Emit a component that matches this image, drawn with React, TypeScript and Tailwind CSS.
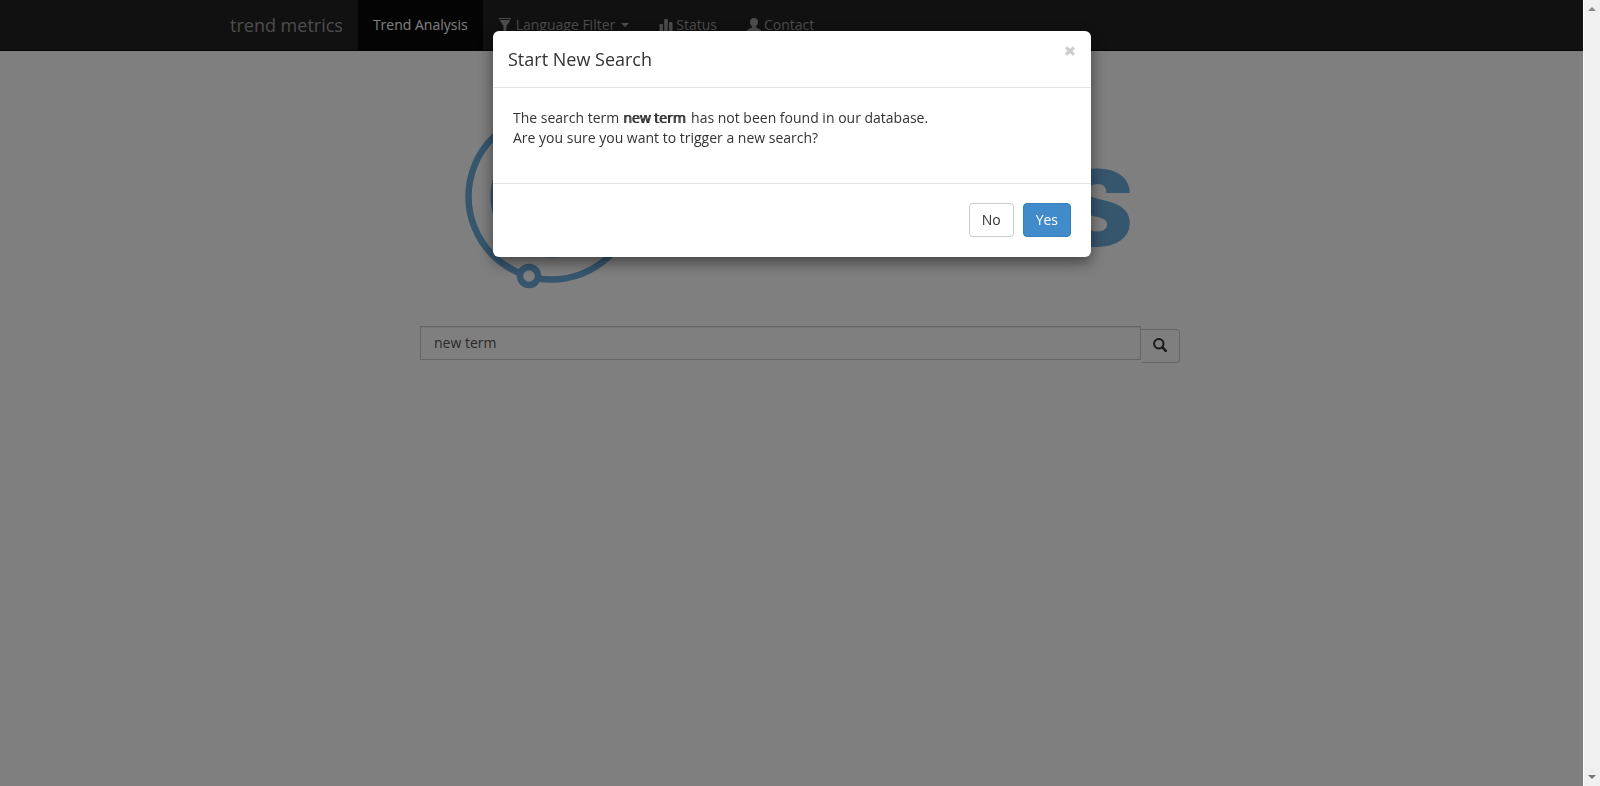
import { useState } from "react";

const navLink = "flex h-[50px] items-center px-[15px] text-[#999]";

function FilterIcon() {
  return (
    <svg className="h-3.5 w-3.5" viewBox="0 0 14 14" fill="currentColor" aria-hidden="true">
      <path d="M1 0h12v1H1zM1.500 2h11L8.500 8v4l-3 2V8z" />
    </svg>
  );
}

function StatsIcon() {
  return (
    <svg className="h-3.5 w-3.5" viewBox="0 0 14 14" fill="currentColor" aria-hidden="true">
      <rect x="0.500" y="6" width="3.500" height="8" rx="1" />
      <rect x="5.200" y="1" width="3.600" height="13" rx="1" />
      <rect x="10" y="4" width="3.500" height="10" rx="1" />
    </svg>
  );
}

function UserIcon() {
  return (
    <svg className="h-3.5 w-3.5" viewBox="0 0 14 14" fill="currentColor" aria-hidden="true">
      <path d="M7 0c2.700 0 4 1.600 4 3.800 0 1.900-.8 3.600-2 4.600v1.100c1 .8 5 1.500 5 3.300V14H0v-1.200C0 11 4 10.300 5 9.500V8.400C3.800 7.400 3 5.700 3 3.800 3 1.600 4.300 0 7 0z" />
    </svg>
  );
}

function SearchIcon() {
  return (
    <svg className="mb-0.5 h-3.5 w-3.5" viewBox="0 0 14 14" fill="none" stroke="currentColor" aria-hidden="true">
      <circle cx="5.800" cy="5.800" r="4.700" strokeWidth="2" />
      <path d="M9.400 9.400l3.400 3.400" strokeWidth="2.600" strokeLinecap="round" />
    </svg>
  );
}

function Logo() {
  return (
    <svg className="h-[220px] w-[680px]" viewBox="0 0 680 220" role="img" aria-label="Logo">
      <g fill="none" stroke="#6daddd">
        <circle cx="91.500" cy="119.500" r="83" strokeWidth="6.500" />
        <circle cx="91.500" cy="119.500" r="57" strokeWidth="8" />
        <circle cx="69" cy="199" r="9" strokeWidth="6.500" fill="#fff" />
      </g>
      <text
        x="674"
        y="169"
        textAnchor="end"
        className="fill-[#6daddd] font-[Roboto,sans-serif] text-[142px] font-black"
      >
        s
      </text>
    </svg>
  );
}

function Navbar() {
  return (
    <nav className="h-[51px] border-b border-[#080808] bg-[#222]">
      <div className="mx-auto flex max-w-[1170px]">
        <a href="#home" className="flex h-[50px] items-center px-[15px] text-lg text-[#999]">
          trend metrics
        </a>
        <a href="#trends" className="flex h-[50px] items-center bg-[#080808] px-[15px] text-white">
          Trend Analysis
        </a>
        <a href="#language" className={navLink}>
          <FilterIcon />
          <span className="ml-1">Language Filter</span>
          <span className="ml-1.5 border-x-4 border-t-4 border-x-transparent border-t-[#999]" />
        </a>
        <a href="#status" className={navLink}>
          <StatsIcon />
          <span className="ml-[3px]">Status</span>
        </a>
        <a href="#contact" className={navLink}>
          <UserIcon />
          <span className="ml-[3px]">Contact</span>
        </a>
      </div>
    </nav>
  );
}

function Scrollbar() {
  return (
    <div
      aria-hidden="true"
      className="fixed inset-y-0 right-0 flex w-[17px] flex-col items-center justify-between border-l border-white bg-[#f0f0f0] py-[7px]"
    >
      <span className="border-x-4 border-b-4 border-x-transparent border-b-[#888]" />
      <span className="border-x-4 border-t-4 border-x-transparent border-t-[#777]" />
    </div>
  );
}

function Modal({ term, onClose }: { term: string; onClose: () => void }) {
  return (
    <div className="fixed inset-y-0 right-4 left-0 flex items-start justify-center bg-black/50 px-2.5 pt-[31px]">
      <div
        role="dialog"
        aria-modal="true"
        aria-labelledby="dialog-title"
        className="w-full max-w-[598px] rounded-md bg-white shadow-[0_5px_15px_rgba(0,0,0,0.5)]"
      >
        <header className="flex items-start justify-between border-b border-[#e5e5e5] p-[15px]">
          <h4 id="dialog-title" className="text-lg leading-[26px]">
            Start New Search
          </h4>
          <button type="button" aria-label="Close" onClick={onClose} className="text-[#ccc]">
            <svg className="h-2.5 w-3" viewBox="0 0 12 10" fill="none" stroke="currentColor" aria-hidden="true">
              <path d="M2 1.300l8 7.400M10 1.300l-8 7.400" strokeWidth="3.200" />
            </svg>
          </button>
        </header>
        <div className="p-5 pb-[35px]">
          <p>
            The search term{" "}
            <b className="pr-0.5 font-normal [text-shadow:1px_0_0_currentColor]">{term}</b> has not
            been found in our database.
            <br />
            Are you sure you want to trigger a new search?
          </p>
        </div>
        <footer className="flex justify-end gap-[9px] border-t border-[#e5e5e5] px-5 pt-[19px] pb-5">
          <button type="button" onClick={onClose} className="h-[34px] rounded border border-[#ccc] px-3 text-[#333]">
            No
          </button>
          <button type="button" onClick={onClose} className="h-[34px] rounded border border-[#357ebd] bg-[#428bca] px-3 text-white">
            Yes
          </button>
        </footer>
      </div>
    </div>
  );
}

export default function App() {
  const [open, setOpen] = useState(true);
  const [term, setTerm] = useState("new term");
  return (
    <div className="min-h-screen bg-white font-['Open_Sans',sans-serif] text-sm text-[#333]">
      <Navbar />
      <main className="flex flex-col items-center pt-[26px]">
        <Logo />
        <form
          className="mt-[29px] flex w-full max-w-[760px] items-start"
          onSubmit={(e) => {
            e.preventDefault();
            setOpen(true);
          }}
        >
          <input
            aria-label="Search term"
            value={term}
            onChange={(e) => setTerm(e.target.value)}
            className="h-[34px] min-w-0 flex-1 border border-[#ccc] px-[13px] pb-0.5 text-[#555] shadow-[inset_0_1px_1px_rgba(0,0,0,0.075)] outline-none"
          />
          <button
            type="submit"
            aria-label="Search"
            className="mt-[3px] flex h-[34px] w-[39px] items-center justify-center rounded-r border border-l-0 border-[#ccc] text-[#333]"
          >
            <SearchIcon />
          </button>
        </form>
      </main>
      {open && <Modal term={term} onClose={() => setOpen(false)} />}
      <Scrollbar />
    </div>
  );
}
